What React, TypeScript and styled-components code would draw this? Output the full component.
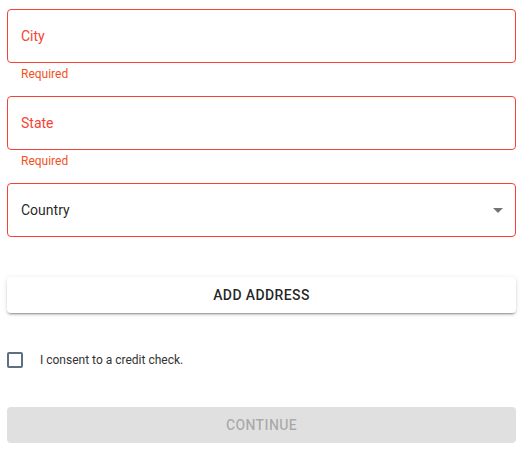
import React, { useState } from 'react';
import styled, { createGlobalStyle } from 'styled-components';

const GlobalStyle = createGlobalStyle`
    body {
        margin: 0;
        background: #ffffff;
        font-family: Roboto, "Liberation Sans", sans-serif;
    }
`;

const Wrapper = styled.div`
    display: flex;
    flex-direction: column;
    padding: 9px 8px 0 7px;
    width: 509px;
`;

const Field = styled.div`
    display: flex;
    flex-direction: column;
    margin-bottom: 14px;
`;

const Box = styled.div<{ error?: boolean }>`
    display: flex;
    align-items: center;
    justify-content: space-between;
    height: 54px;
    box-sizing: border-box;
    padding: 0 12px 0 13px;
    border: 1px solid ${({ error }) => (error ? '#f44336' : 'rgba(0, 0, 0, 0.23)')};
    border-radius: 4px;
`;

const Placeholder = styled.span<{ error?: boolean }>`
    font-size: 14px;
    color: ${({ error }) => (error ? '#f44336' : 'rgba(0, 0, 0, 0.87)')};
`;

const Helper = styled.div`
    margin: 4px 14px 0;
    font-size: 12px;
    line-height: 15px;
    color: #f4511e;
`;

const Caret = styled.span`
    width: 0;
    height: 0;
    border-left: 5px solid transparent;
    border-right: 5px solid transparent;
    border-top: 5px solid rgba(0, 0, 0, 0.54);
`;

const Button = styled.button<{ disabled?: boolean }>`
    height: 36px;
    border: none;
    border-radius: 4px;
    font-family: Roboto, "Liberation Sans", sans-serif;
    font-size: 14px;
    font-weight: 500;
    letter-spacing: 0.4px;
    text-transform: uppercase;
    background: ${({ disabled }) => (disabled ? '#e0e0e0' : '#ffffff')};
    color: ${({ disabled }) => (disabled ? 'rgba(0, 0, 0, 0.26)' : 'rgba(0, 0, 0, 0.87)')};
    box-shadow: ${({ disabled }) =>
        disabled
            ? 'none'
            : '0 3px 1px -2px rgba(0,0,0,0.2), 0 2px 2px 0 rgba(0,0,0,0.14), 0 1px 5px 0 rgba(0,0,0,0.12)'};
`;

const AddButton = styled(Button)`
    margin-top: 26px;
`;

const ConsentRow = styled.label`
    display: flex;
    align-items: center;
    margin: 39px 0 39px;
    font-size: 12px;
    color: #333333;
`;

const CheckBox = styled.span<{ checked: boolean }>`
    width: 16px;
    height: 16px;
    box-sizing: border-box;
    border: 2px solid #5e6f82;
    border-radius: 2px;
    margin-right: 17px;
    background: ${({ checked }) => (checked ? '#5e6f82' : 'transparent')};
`;

const App = () => {
    const [consent, setConsent] = useState(false);

    return (
        <Wrapper>
            <GlobalStyle />
            <Field>
                <Box error>
                    <Placeholder error>City</Placeholder>
                </Box>
                <Helper>Required</Helper>
            </Field>
            <Field>
                <Box error>
                    <Placeholder error>State</Placeholder>
                </Box>
                <Helper>Required</Helper>
            </Field>
            <Field>
                <Box error>
                    <Placeholder>Country</Placeholder>
                    <Caret />
                </Box>
            </Field>
            <AddButton>Add Address</AddButton>
            <ConsentRow onClick={() => setConsent(!consent)}>
                <CheckBox checked={consent} />
                I consent to a credit check.
            </ConsentRow>
            <Button disabled>Continue</Button>
        </Wrapper>
    );
};

export default App;
